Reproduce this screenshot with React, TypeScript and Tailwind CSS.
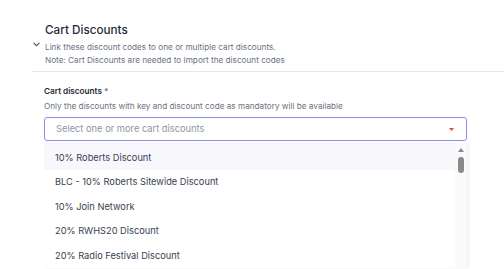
import React from 'react';

const items = [
  '10% Roberts Discount',
  'BLC - 10% Roberts Sitewide Discount',
  '10% Join Network',
  '20% RWHS20 Discount',
  '20% Radio Festival Discount',
];

function App() {
  return (
    <div className="h-[269px] overflow-hidden bg-white pl-[32px] pt-[22px]" style={{ fontFamily: 'Inter, "Noto Sans", sans-serif' }}>
      <div className="flex">
        <div className="w-[13px] pt-[20px]">
          <svg width="7" height="5" viewBox="0 0 7 5" className="ml-[1px]">
            <path d="M0.6 0.8 L3.5 3.7 L6.4 0.8" stroke="#4b5563" strokeWidth="1.1" fill="none" />
          </svg>
        </div>
        <div>
          <h2 className="text-[11.7px] font-medium leading-[16px] text-[#1f2937]">Cart Discounts</h2>
          <p className="mt-[3px] text-[8.2px] leading-[13px] text-[#6b7280]">
            Link these discount codes to one or multiple cart discounts.
            <br />
            Note: Cart Discounts are needed to Import the discount codes
          </p>
        </div>
      </div>
      <div className="mt-[4px] h-px bg-[#e5e7eb]" />
      <div className="ml-[12px] w-[423px] pt-[13px]">
        <div className="text-[8.2px] font-semibold leading-[12px] text-[#1f2937]">
          Cart discounts <span className="text-[#6b7280]">*</span>
        </div>
        <div className="mt-[3px] text-[8.2px] leading-[12px] text-[#6b7280]">
          Only the discounts with key and discount code as mandatory will be available
        </div>
        <div className="mt-[5px] flex h-[24px] items-center justify-between rounded-[3px] border border-[#8b8bf5] pl-[11px] pr-[12px]">
          <span className="text-[9.3px] text-[#9094a6]">Select one or more cart discounts</span>
          <svg width="5" height="3" viewBox="0 0 5 3">
            <path d="M0 0 H5 L2.5 3 Z" fill="#ef4444" />
          </svg>
        </div>
        <div className="mt-[2px] flex bg-white shadow-[2px_0_3px_rgba(0,0,0,0.06)]">
          <div className="flex-1">
            {items.map((it, i) => (
              <div
                key={it}
                className={`flex items-center pl-[11px] text-[9.25px] text-[#374151] ${i === 0 ? 'h-[27px] bg-[#f8f8fc] pt-[2px]' : 'h-[24.5px]'}`}
              >
                {it}
              </div>
            ))}
          </div>
          <div className="flex w-[12px] flex-col items-center bg-[#fafafa] pt-[5px]">
            <svg width="6" height="4" viewBox="0 0 6 4">
              <path d="M0 4 H6 L3 0 Z" fill="#8a8a8a" />
            </svg>
            <div className="mt-[5px] h-[16px] w-[6px] rounded-full bg-[#8a8a8a]" />
          </div>
        </div>
      </div>
    </div>
  );
}

export default App;
